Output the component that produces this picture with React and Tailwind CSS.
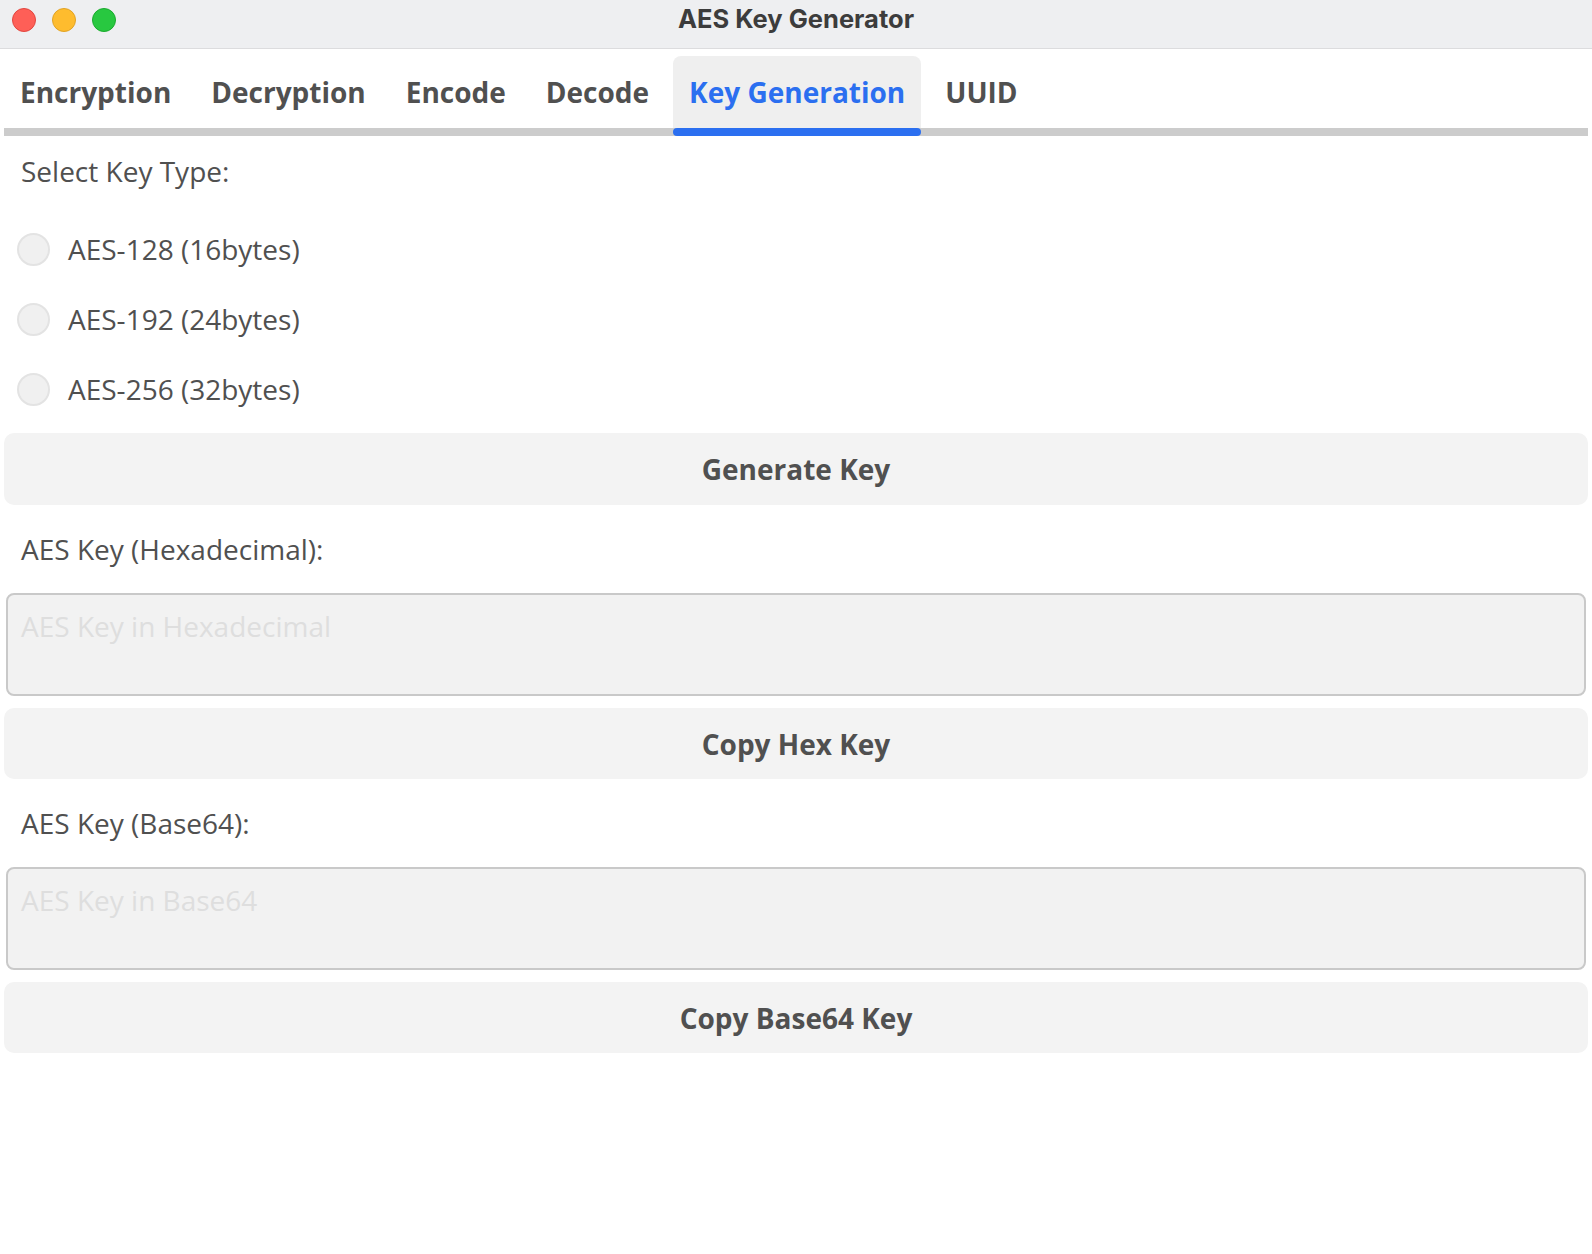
import { useState } from 'react'

const tabs = ['Encryption', 'Decryption', 'Encode', 'Decode', 'Key Generation', 'UUID']
const keyTypes = ['AES-128 (16bytes)', 'AES-192 (24bytes)', 'AES-256 (32bytes)']

function TitleBar() {
  return (
    <div className="grid h-[49px] grid-cols-[1fr_auto_1fr] items-start border-b border-[#dcdcde] bg-[#eeeff1]">
      <div className="flex items-center gap-4 pl-3 pt-2">
        <span className="h-6 w-6 rounded-full border border-[#e2463f] bg-[#fe5f57]" />
        <span className="h-6 w-6 rounded-full border border-[#e1a325] bg-[#febc2e]" />
        <span className="h-6 w-6 rounded-full border border-[#1aab2e] bg-[#28c840]" />
      </div>
      <h1 className="pt-1 font-['Inter',sans-serif] text-[25.5px] leading-[30px] font-bold text-[#3c3c3c]">
        AES Key Generator
      </h1>
      <div />
    </div>
  )
}

function Tabs({ active, onSelect }) {
  return (
    <div className="mx-1 mt-[7px] flex items-end gap-2 border-b-8 border-[#cccccc]">
      {tabs.map(tab => {
        const on = tab === active
        return (
          <button
            key={tab}
            type="button"
            onClick={() => onSelect(tab)}
            className="-mb-2 flex flex-col"
          >
            <span
              className={
                on
                  ? 'flex h-[72px] items-center rounded-t-[8px] bg-[#efefef] px-4 text-[28px] font-bold text-[#2b6ff0]'
                  : 'flex h-[72px] items-center rounded-t-[8px] px-4 text-[28px] font-bold text-[#505050]'
              }
            >
              {tab}
            </span>
            <span className={on ? 'h-2 rounded-full bg-[#2b6ff0]' : 'h-2'} />
          </button>
        )
      })}
    </div>
  )
}

function Label({ children }) {
  return <p className="my-[25px] pl-[17px] text-[28px] leading-[38px] text-[#505050]">{children}</p>
}

function WideButton({ children, tall }) {
  return (
    <button
      type="button"
      className={
        tall
          ? 'h-[72px] w-full rounded-[10px] bg-[#f3f3f3] text-[28px] font-bold text-[#505050]'
          : 'h-[71px] w-full rounded-[10px] bg-[#f3f3f3] text-[28px] font-bold text-[#505050]'
      }
    >
      {children}
    </button>
  )
}

function KeyBox({ placeholder }) {
  return (
    <textarea
      readOnly
      placeholder={placeholder}
      className="mx-[2px] block h-[103px] w-[calc(100%-4px)] resize-none rounded-[8px] border-2 border-[#c9c9c9] bg-[#f2f2f2] px-[13px] pt-[12px] text-[28px] leading-[38px] text-[#505050] outline-none placeholder:text-[#dedede]"
    />
  )
}

export default function App() {
  const [active, setActive] = useState('Key Generation')
  const [keyType, setKeyType] = useState(null)

  return (
    <div className="min-h-[1254px] w-full bg-white font-['Open_Sans',sans-serif]">
      <TitleBar />
      <Tabs active={active} onSelect={setActive} />

      <div className="px-1">
        <p className="mt-4 pl-[17px] text-[28px] leading-[38px] text-[#505050]">Select Key Type:</p>

        <div className="mt-6 flex flex-col">
          {keyTypes.map(type => (
            <label key={type} className="flex h-[70px] cursor-pointer items-center pl-[13px]">
              <input
                type="radio"
                name="keyType"
                className="sr-only"
                checked={keyType === type}
                onChange={() => setKeyType(type)}
              />
              <span className="flex h-[33px] w-[33px] items-center justify-center rounded-full border-2 border-[#e3e3e3] bg-[#f0f0f0]">
                {keyType === type && <span className="h-3 w-3 rounded-full bg-[#2b6ff0]" />}
              </span>
              <span className="ml-[18px] text-[28px] leading-[38px] text-[#505050]">{type}</span>
            </label>
          ))}
        </div>

        <div className="mt-[9px]">
          <WideButton tall>Generate Key</WideButton>
        </div>

        <Label>AES Key (Hexadecimal):</Label>
        <KeyBox placeholder="AES Key in Hexadecimal" />
        <div className="mt-3">
          <WideButton>Copy Hex Key</WideButton>
        </div>

        <Label>AES Key (Base64):</Label>
        <KeyBox placeholder="AES Key in Base64" />
        <div className="mt-3">
          <WideButton>Copy Base64 Key</WideButton>
        </div>
      </div>
    </div>
  )
}
